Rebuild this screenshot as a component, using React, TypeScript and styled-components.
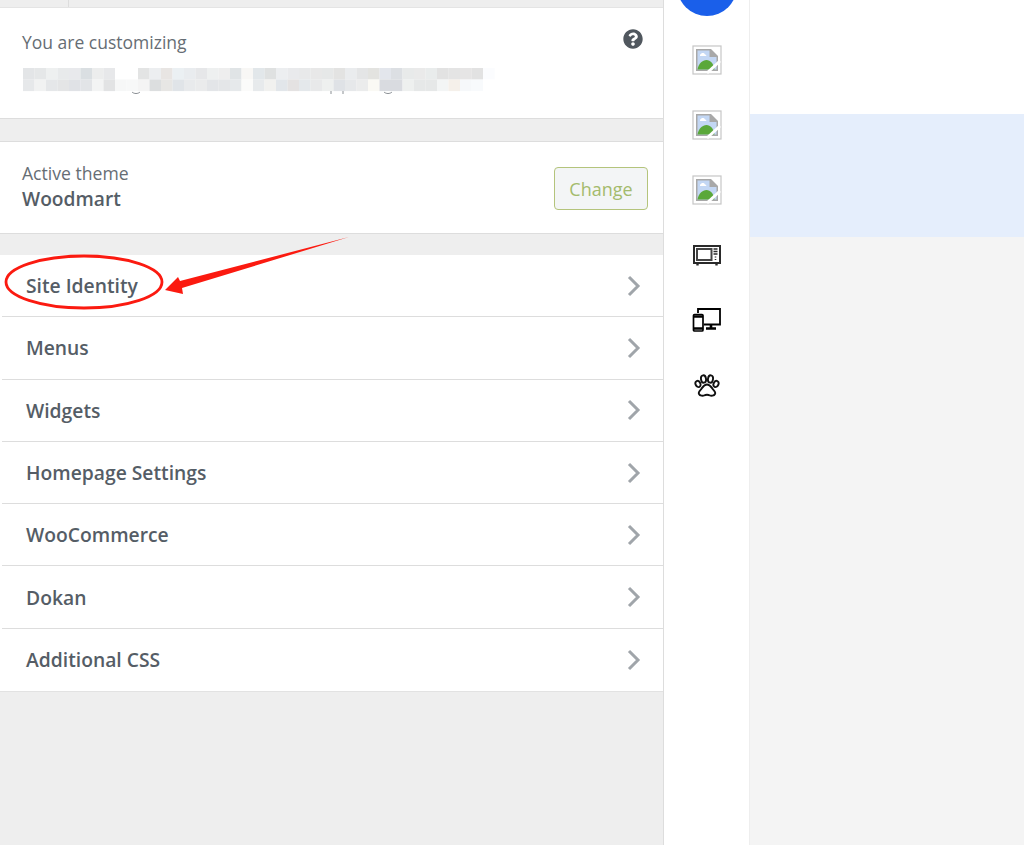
import React from 'react';
import styled, { createGlobalStyle } from 'styled-components';
import { FaQuestionCircle } from 'react-icons/fa';

const GlobalStyle = createGlobalStyle`
	html, body {
		margin: 0;
		padding: 0;
		height: 100%;
		overflow: hidden;
	}
	body {
		font-family: 'Open Sans', 'Noto Sans', sans-serif;
		background: #fff;
	}
`;

const Page = styled.div`
	position: relative;
	width: 1024px;
	height: 845px;
	display: flex;
	overflow: hidden;
`;

const Panel = styled.aside`
	width: 663px;
	flex-shrink: 0;
	background: #eee;
	border-right: 1px solid #ddd;
	display: flex;
	flex-direction: column;
`;

const TopBar = styled.div`
	height: 7px;
	border-bottom: 1px solid #e4e4e4;
	box-sizing: content-box;
	display: flex;
	.tab {
		width: 68px;
		border-right: 1px solid #ddd;
	}
`;

const InfoSection = styled.section`
	height: 111px;
	background: #fff;
	border-bottom: 1px solid #ddd;
	padding: 21px 20px 0 22px;
	box-sizing: border-box;
	margin-bottom: 22px;
`;

const InfoHead = styled.div`
	display: flex;
	justify-content: space-between;
	align-items: flex-start;
	font-size: 17.5px;
	line-height: 26px;
	color: #666d74;
	svg {
		color: #50575e;
		margin-top: 0;
	}
`;

const Mosaic = styled.svg`
	display: block;
	margin-top: 13px;
`;

const ThemeSection = styled.section`
	height: 93px;
	background: #fff;
	border-top: 1px solid #ddd;
	border-bottom: 1px solid #ddd;
	padding: 0 15px 0 22px;
	box-sizing: border-box;
	margin-bottom: 21px;
	display: flex;
	align-items: center;
	justify-content: space-between;
`;

const ThemeLabel = styled.div`
	font-size: 17.6px;
	line-height: 24px;
	color: #666d74;
	margin-top: -2px;
	strong {
		display: block;
		font-size: 19.2px;
		line-height: 28px;
		font-weight: 600;
		color: #555d66;
	}
`;

const ChangeButton = styled.button`
	width: 94px;
	height: 43px;
	margin-top: 2px;
	padding: 0;
	font-family: inherit;
	font-size: 18px;
	color: #a4bb6c;
	background: #f3f5f6;
	border: 1px solid #b4c47c;
	border-radius: 4px;
`;

const MenuList = styled.ul`
	list-style: none;
	margin: 0;
	padding: 0 0 0 2px;
	background: #fff;
	border-bottom: 1px solid #e2e2e2;
`;

const MenuRow = styled.li`
	height: 62.3px;
	box-sizing: border-box;
	padding: 0 22px 0 24px;
	border-bottom: 1px solid #ddd;
	display: flex;
	align-items: center;
	justify-content: space-between;
	font-size: 19.3px;
	font-weight: 600;
	color: #555d66;
	&:last-child {
		border-bottom: none;
	}
`;

const IconRail = styled.nav`
	width: 86px;
	flex-shrink: 0;
	background: #fff;
	border-right: 1px solid #eee;
	box-sizing: border-box;
	display: flex;
	flex-direction: column;
	align-items: center;
	gap: 35px;
	color: #111;
`;

const RailDot = styled.div`
	width: 60px;
	height: 60px;
	margin-top: -44px;
	margin-bottom: -6px;
	border-radius: 50%;
	background: #1a5fea;
`;

const RailSlot = styled.div`
	height: 30px;
	display: flex;
	align-items: center;
	justify-content: center;
`;

const Content = styled.main`
	flex: 1;
	background: #f4f4f4;
	display: flex;
	flex-direction: column;
`;

const ContentBand = styled.div<{ $tint: string; $height: number }>`
	height: ${(p) => p.$height}px;
	background: ${(p) => p.$tint};
`;

const Annotation = styled.svg`
	position: absolute;
	left: 0;
	top: 0;
	pointer-events: none;
`;

const mosaicRows = [
	['#e3e5e7', '#e5e7e8', '#eef0f0', '#e8eaeb', '#e8e9ec', '#dadfe2', '#eceded', '#e7e8ea', '#ffffff', '#ffffff', '#e3e4e4', '#eceef0', '#e8e5e3', '#ebf0f3', '#e9ecef', '#e6e7e9', '#eef0f0', '#eeeeee', '#e0e4e6', '#f8f7f5', '#e2e7ea', '#dfe1e1', '#eceef0', '#e9eaec', '#e8e9ea', '#e8e8e8', '#e6e8e8', '#e3e3e2', '#eaecee', '#e4e5e6', '#e3e3e0', '#e3e6ec', '#dcdfe3', '#e8eaea', '#eaeaea', '#e9ecec', '#e2e2e2', '#e4e4e4', '#e6e5e5', '#e2e2e2', '#fbfcfe'],
	['#e6e8ea', '#f1f2f2', '#e5e7e9', '#e4e5e6', '#e0e2e6', '#e2e4e7', '#f3f4f4', '#e2e3e4', '#f6f7f7', '#f7f8f8', '#f4f4f4', '#dcdedf', '#e7e6e4', '#e0e4e8', '#e8eaec', '#eaebec', '#e3e5e8', '#e4e6e8', '#e6e9eb', '#fbfbfa', '#e7eaec', '#f1f1ef', '#e2e6ea', '#e4e2e2', '#e4e8eb', '#e8e9ea', '#eef0ef', '#dfe2e6', '#e6e8ea', '#ebecec', '#faf9f4', '#d9dbe0', '#d9dbe0', '#eef0ef', '#e6e8e8', '#e6e8e8', '#f3f5f5', '#f5f0ea', '#f6f8fa', '#f8fafc', '#ffffff'],
];

const menuItems = ['Site Identity', 'Menus', 'Widgets', 'Homepage Settings', 'WooCommerce', 'Dokan', 'Additional CSS'];

function BrokenImage() {
	return (
		<svg width="30" height="30" viewBox="0 0 30 30">
			<rect x="1" y="1" width="28" height="28" fill="#fff" stroke="#c6c6c6" strokeWidth="1.2" />
			<path d="M4 4h15l7 7v15H4z" fill="#a8a8a8" />
			<path d="M5.500 5.500h12v6.500h7v12.500h-19z" fill="#c3d7f4" />
			<path d="M8 10c1.500-2.500 4-2.500 5-.5 1.500 0 2 1.500.5 1.500H8z" fill="#fff" />
			<path d="M5.500 24.500c1-6 5-9.500 9-9.500s7 3.500 8 9.500z" fill="#5aa83a" />
			<path d="M15 28L28 16" stroke="#fff" strokeWidth="3" />
		</svg>
	);
}

function Microwave() {
	return (
		<svg width="28" height="21" viewBox="0 0 28 21" fill="none" stroke="#2a2a2a">
			<rect x="1" y="1" width="26" height="17" strokeWidth="2" fill="#fff" />
			<rect x="4" y="4" width="14.500" height="11" strokeWidth="2" stroke="#444" />
			<path d="M20.500 4h4M20.500 6.500h4M20.500 9h4" strokeWidth="1.300" />
			<path d="M22.500 11.500v1M22.500 14v1" strokeWidth="1.600" />
			<path d="M4.500 18.500v2M23.500 18.500v2" strokeWidth="2.400" />
		</svg>
	);
}

function Devices() {
	return (
		<svg width="29" height="24" viewBox="0 0 29 24" fill="none" stroke="#000">
			<path d="M6 5V1h22v15.500H12" strokeWidth="1.800" />
			<path d="M19 16v4M14 20.500h10" strokeWidth="2.600" />
			<rect x="1.500" y="6.500" width="9.500" height="16.500" rx="1" strokeWidth="1.700" fill="#fff" />
			<path d="M1.500 8.500h9.500M1.500 20.500h9.500" strokeWidth="2.400" />
		</svg>
	);
}

function Paw() {
	return (
		<svg width="26" height="23" viewBox="0 0 26 23" fill="none" stroke="#111" strokeWidth="1.900">
			<ellipse cx="4" cy="10" rx="2.400" ry="3.200" transform="rotate(-25 4 10)" />
			<ellipse cx="9.500" cy="5" rx="2.500" ry="3.700" transform="rotate(-8 9.500 5)" />
			<ellipse cx="16.500" cy="5" rx="2.500" ry="3.700" transform="rotate(8 16.500 5)" />
			<ellipse cx="22" cy="10" rx="2.400" ry="3.200" transform="rotate(25 22 10)" />
			<path d="M13 10.500c-3 0-4.500 3-6 4.800-2 2-3 3-2 4.700 1 2 4 2 5 1.500 2-1 4-1 6 0 1 .5 4 .5 5-1.500 1-1.700 0-2.700-2-4.700-1.500-1.800-3-4.800-6-4.800z" />
		</svg>
	);
}

function Chevron() {
	return (
		<svg width="14" height="22" viewBox="0 0 14 22" fill="none" stroke="#a0a5aa" strokeWidth="3">
			<path d="M2 2l9 9-9 9" />
		</svg>
	);
}

export default function App() {
	return (
		<Page>
			<GlobalStyle />
			<Panel>
				<TopBar>
					<div className="tab" />
				</TopBar>
				<InfoSection>
					<InfoHead>
						<span>You are customizing</span>
						<FaQuestionCircle size={20} />
					</InfoHead>
					<Mosaic width="490" height="28" viewBox="0 0 490 28">
						{mosaicRows.map((row, r) =>
							row.map((c, i) => <rect key={`${r}-${i}`} x={1 + i * 11.5} y={r * 11.5} width="11.6" height="11.6" fill={c} />)
						)}
						<path d="M110 24c2 2 6 2 8 0" stroke="#8a8f94" fill="none" />
						<path d="M309 23v3M321 23v3" stroke="#8a8f94" fill="none" />
						<path d="M362 24c2 2 6 2 8 0" stroke="#8a8f94" fill="none" />
					</Mosaic>
				</InfoSection>
				<ThemeSection>
					<ThemeLabel>
						Active theme
						<strong>Woodmart</strong>
					</ThemeLabel>
					<ChangeButton>Change</ChangeButton>
				</ThemeSection>
				<MenuList>
					{menuItems.map((item) => (
						<MenuRow key={item}>
							{item}
							<Chevron />
						</MenuRow>
					))}
				</MenuList>
			</Panel>
			<IconRail>
				<RailDot />
				<RailSlot>
					<BrokenImage />
				</RailSlot>
				<RailSlot>
					<BrokenImage />
				</RailSlot>
				<RailSlot>
					<BrokenImage />
				</RailSlot>
				<RailSlot>
					<Microwave />
				</RailSlot>
				<RailSlot>
					<Devices />
				</RailSlot>
				<RailSlot>
					<Paw />
				</RailSlot>
			</IconRail>
			<Content>
				<ContentBand $tint="#fff" $height={114} />
				<ContentBand $tint="#e5eefc" $height={123} />
			</Content>
			<Annotation width="1024" height="845" viewBox="0 0 1024 845">
				<ellipse cx="84" cy="282" rx="78" ry="26" fill="none" stroke="#fb1a10" strokeWidth="2.800" />
				<path d="M349 237L180 281L178 277L165 290L183 294L182 288Z" fill="#fb1a10" />
			</Annotation>
		</Page>
	);
}
